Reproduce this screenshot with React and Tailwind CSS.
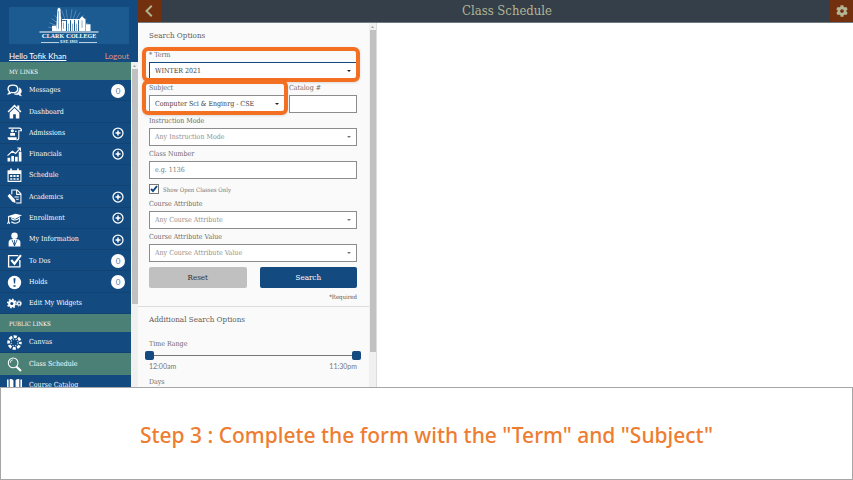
import { useState } from 'react'
import clsx from 'clsx'
import { FaCog } from 'react-icons/fa'

const ICONS = {
  comments: (
    <svg viewBox="0 0 28 28" className="size-[15px]" fill="none" stroke="currentColor">
      <path d="M11 4c5.500 0 9 3 9 7s-3.500 7-9 7l-3-.5Q6 20 3 20q2-2 1.500-4Q2 14 2 11c0-4 3.500-7 9-7z" strokeWidth="2.500" />
      <path d="M23 9q4 2 4 6 0 3-2 4.500 0 2.500 2 4.500-4 0-5.500-2.500-4.500 1-8-1 8.500 0 9.500-8z" fill="currentColor" strokeWidth="1" />
    </svg>
  ),
  home: (
    <svg viewBox="0 0 28 28" className="size-[15px]" fill="currentColor">
      <path d="M14 1 1 14l2 2L14 5l11 11 2-2-4-4V3h-4v3z" />
      <path d="M14 7.500 5 16.500V27h6.500v-8h5v8H23V16.500z" />
    </svg>
  ),
  admissions: (
    <svg viewBox="0 0 28 28" className="size-[15px]" fill="currentColor">
      <circle cx="10" cy="9" r="3" />
      <path d="M6 13h9v5H6zM1 21h17v5H4q-3 0-3-5z" />
      <path d="M3 4h20q4 0 4 5h-5v13q0 4-4 4M15 10h3" fill="none" stroke="currentColor" strokeWidth="2" />
    </svg>
  ),
  financials: (
    <svg viewBox="0 0 28 28" className="size-[15px]" fill="currentColor">
      <path d="M1 20h5v7H1zM8 17h5v10H8zM15 18h5v9h-5zM22 9h5v18h-5z" />
      <path d="m1 16 9-8 6 4 8-9M19 2h6v6" fill="none" stroke="currentColor" strokeWidth="2" />
    </svg>
  ),
  calendar: (
    <svg viewBox="0 0 28 28" className="size-[15px]" fill="currentColor">
      <path d="M1 4h26v22H1zm2 7v13h22V11z" fillRule="evenodd" />
      <path d="M6 1h3v5H6zM19 1h3v5h-3z" />
      <path d="M6 13h4v4H6zM12 13h4v4h-4zM18 13h4v4h-4zM6 19h4v3H6zM12 19h4v3h-4zM18 19h4v3h-4z" />
    </svg>
  ),
  academics: (
    <svg viewBox="0 0 28 28" className="size-[15px]" fill="currentColor">
      <path d="M9 10V2h10l7 7v17H17M18 2v8h8M14 15h8M17 19h5" fill="none" stroke="currentColor" strokeWidth="2" />
      <path d="m1 13 4-4 10 11 1 6-6-2z" />
    </svg>
  ),
  cap: (
    <svg viewBox="0 0 28 28" className="size-[15px]" fill="currentColor">
      <path d="m1 10 15-5 12 3-13 7z" />
      <path d="M8 14q7 6 15-1v7q-7 6-15 0M3 10v11M1 24l2-5 2 5" fill="none" stroke="currentColor" strokeWidth="2" />
    </svg>
  ),
  person: (
    <svg viewBox="0 0 28 28" className="size-[15px]" fill="currentColor">
      <circle cx="14" cy="7" r="6" />
      <path d="M9 13h10q6 1 6 7v7H3v-7q0-6 6-7z" />
      <path d="m9 14 5 12 5-12M14 15v11" fill="none" stroke="#134a80" strokeWidth="1.500" />
    </svg>
  ),
  check: (
    <svg viewBox="0 0 28 28" className="size-[15px]" fill="none" stroke="currentColor">
      <path d="M24 13v13H3V5h18" strokeWidth="2.500" />
      <path d="m8 13 6 7L26 4" strokeWidth="4" />
    </svg>
  ),
  alert: (
    <svg viewBox="0 0 28 28" className="size-[15px]" fill="currentColor">
      <circle cx="14" cy="14" r="12.500" />
      <path d="M12 6h4l-1 10h-2zM12 19h4v3h-4z" fill="#134a80" />
    </svg>
  ),
  cogs: (
    <svg viewBox="0 0 28 28" className="size-[15px]" fill="none" stroke="currentColor">
      <circle cx="9" cy="14" r="5" strokeWidth="4" />
      <circle cx="9" cy="14" r="8" strokeWidth="2.500" strokeDasharray="3.100 3.100" />
      <circle cx="22.500" cy="14" r="3" strokeWidth="2.500" />
      <circle cx="22.500" cy="14" r="5" strokeWidth="1.500" strokeDasharray="2 2" />
    </svg>
  ),
  canvas: (
    <svg viewBox="0 0 28 28" className="size-[15px]" fill="none" stroke="currentColor">
      <circle cx="14" cy="14" r="11" strokeWidth="5" strokeDasharray="6 2.640" strokeDashoffset="3" />
      <circle cx="14" cy="14" r="6.500" strokeWidth="2" strokeDasharray="2 3.100" strokeDashoffset="-1.500" />
    </svg>
  ),
  search: (
    <svg viewBox="0 0 28 28" className="size-[15px]" fill="none" stroke="currentColor">
      <circle cx="11.500" cy="11" r="9" strokeWidth="2" />
      <path d="M6 11q0-5 5-6" strokeWidth="1.500" />
      <path d="m18 18 8 8" strokeWidth="4" />
    </svg>
  ),
  books: (
    <svg viewBox="0 0 28 28" className="size-[15px]" fill="currentColor">
      <path d="M0 3h3v24H0zM5 2q4-1 7 2v23q-3-2-7-2zM16 4q3-3 7-2v23q-4 0-7 2zM25 3h3v24h-3z" />
    </svg>
  ),
}

const MY_LINKS = [
  { label: 'Messages', icon: ICONS.comments, count: 0 },
  { label: 'Dashboard', icon: ICONS.home },
  { label: 'Admissions', icon: ICONS.admissions, expand: true },
  { label: 'Financials', icon: ICONS.financials, expand: true },
  { label: 'Schedule', icon: ICONS.calendar },
  { label: 'Academics', icon: ICONS.academics, expand: true },
  { label: 'Enrollment', icon: ICONS.cap, expand: true },
  { label: 'My Information', icon: ICONS.person, expand: true },
  { label: 'To Dos', icon: ICONS.check, count: 0 },
  { label: 'Holds', icon: ICONS.alert, count: 0 },
  { label: 'Edit My Widgets', icon: ICONS.cogs },
]

const PUBLIC_LINKS = [
  { label: 'Canvas', icon: ICONS.canvas },
  { label: 'Class Schedule', icon: ICONS.search, active: true },
  { label: 'Course Catalog', icon: ICONS.books },
]

const RAYS = [-80, -68, -56, -44, -32, -20, -8, 8, 20, 32, 44, 56, 68, 80]

function Logo() {
  return (
    <div className="mx-[9px] mt-[7px] flex h-[37px] flex-col items-center bg-[#1c5a92] text-white">
      <svg viewBox="0 0 120 50" className="h-[26px] w-[60px] shrink-0" preserveAspectRatio="none">
        <g stroke="#5f8fba" strokeWidth="1.500">
          {RAYS.map(a => (
            <path key={a} d="M60 26V4" transform={`rotate(${a} 60 46)`} />
          ))}
        </g>
        <g fill="white">
          <path d="m37 4 3-3 3 3 2 42H34z" />
          <path d="M26 36h8v10h-8zM46 27h8v19h-8zM56 25h6v21h-6zM64 25h6v21h-6zM72 25h6v21h-6z" />
          <path d="m80 24 6-6 7 6v22H80zM94 33h9v13h-9z" />
          <path d="M46 23h34v2H46zM1 47h118v2H1z" />
        </g>
        <path d="M39 8v34M49 30v12M59 32v14M67 32v14M75 32v14M86 26v14" stroke="#1c5a92" strokeWidth="1" />
      </svg>
      <p className="font-['Liberation_Serif',serif] text-[7px] leading-[7px] font-bold whitespace-nowrap">
        C<span className="text-[6px]">LARK</span> C<span className="text-[6px]">OLLEGE</span>
      </p>
      <p className="flex items-center gap-px font-['Liberation_Serif',serif] text-[4px] leading-[4px] font-bold">
        <span className="h-px w-[18px] bg-white/70" />
        EST. 1933
        <span className="h-px w-[18px] bg-white/70" />
      </p>
    </div>
  )
}

function SectionTitle({ children }) {
  return (
    <h2 className="flex h-[18px] items-center bg-[#4b8077] pl-[9px] text-[6px] font-medium text-white">{children}</h2>
  )
}

function NavItem({ item }) {
  return (
    <li className={item.active ? 'bg-[#4b8077]' : 'border-b border-[#104273]'}>
      <a href="#" className="flex h-full items-center px-[6px] pt-px">
        <span className="flex w-4 justify-center">{item.icon}</span>
        <span className="ml-[7px] flex-1 text-[7px] font-medium whitespace-nowrap">{item.label}</span>
        {item.count !== undefined && (
          <span className="flex size-[14px] items-center justify-center rounded-full bg-white font-['Lato',sans-serif] text-[8px] text-[#4f7ba6]">
            {item.count}
          </span>
        )}
        {item.expand && (
          <svg viewBox="0 0 24 24" className="mr-px size-3" fill="none" stroke="currentColor">
            <circle cx="12" cy="12" r="10" strokeWidth="2.500" />
            <path d="M12 7v10M7 12h10" strokeWidth="3" />
          </svg>
        )}
      </a>
    </li>
  )
}

function ScrollBar({ thumb }) {
  return (
    <div className="flex w-[7px] shrink-0 flex-col items-center bg-[#f0f0f0]">
      <svg viewBox="0 0 7 7" className="size-[7px] shrink-0" fill="#a0a0a0">
        <path d="M2 5h3L3.500 3z" />
      </svg>
      <div className={`w-[6px] bg-[#c1c1c1] ${thumb}`} />
    </div>
  )
}

function Sidebar() {
  return (
    <aside className="flex w-[138px] shrink-0 flex-col bg-[#134a80] text-white">
      <Logo />
      <div className="flex h-[18px] shrink-0 items-center justify-between px-[9px] pt-[5px] font-['Lato',sans-serif] text-[8px]">
        <a href="#" className="underline">Hello Tofik Khan</a>
        <a href="#" className="text-[#e0917c]">Logout</a>
      </div>
      <div className="flex min-h-0 flex-1">
        <nav className="min-w-0 flex-1 overflow-hidden">
          <SectionTitle>MY LINKS</SectionTitle>
          <ul className="grid h-[234px] auto-rows-fr">
            {MY_LINKS.map(item => <NavItem key={item.label} item={item} />)}
          </ul>
          <SectionTitle>PUBLIC LINKS</SectionTitle>
          <ul className="grid h-16 auto-rows-fr">
            {PUBLIC_LINKS.map(item => <NavItem key={item.label} item={item} />)}
          </ul>
        </nav>
        <ScrollBar thumb="h-[235px]" />
      </div>
    </aside>
  )
}

function Highlight() {
  return (
    <span className="pointer-events-none absolute top-0 -right-[3px] -bottom-[2px] -left-[7px] rounded-md border-4 border-[#f36f21] shadow-sm" />
  )
}

function SelectField({ id, label, value, focused, highlight, muted }) {
  return (
    <div className="relative min-w-0">
      <label htmlFor={id} className="block h-[15px] text-[7px] leading-[17px] text-[#6b6b6b]">{label}</label>
      <div className="relative">
        <select
          id={id}
          className={clsx(
            'block h-[18px] w-full appearance-none border bg-white pl-[5px] text-[7px]',
            focused ? 'border-[#134a80]' : 'border-[#8c8c8c]',
            muted ? 'text-[#8f8f8f]' : 'text-[#3d3d3d]'
          )}
        >
          <option>{value}</option>
        </select>
        <svg viewBox="0 0 8 4" className="pointer-events-none absolute top-2 right-[6px] h-[2px] w-1" fill={muted ? '#777' : '#222'}>
          <path d="M0 0h8L4 4z" />
        </svg>
      </div>
      {highlight && <Highlight />}
    </div>
  )
}

function TextField({ id, label, placeholder }) {
  return (
    <div className="min-w-0">
      <label htmlFor={id} className="block h-[15px] text-[7px] leading-[17px] text-[#6b6b6b]">{label}</label>
      <input
        id={id}
        type="text"
        placeholder={placeholder}
        className="block h-[18px] w-full border border-[#8c8c8c] bg-white px-[5px] text-[7px] placeholder:text-[#777]"
      />
    </div>
  )
}

const THUMB =
  'pointer-events-none col-start-1 row-start-1 h-[9px] w-full appearance-none bg-transparent [&::-webkit-slider-thumb]:pointer-events-auto [&::-webkit-slider-thumb]:size-[9px] [&::-webkit-slider-thumb]:appearance-none [&::-webkit-slider-thumb]:rounded-xs [&::-webkit-slider-thumb]:bg-[#134a80]'

function TimeRange() {
  const [from, setFrom] = useState(0)
  const [to, setTo] = useState(47)

  return (
    <fieldset>
      <legend className="h-[14px] text-[7px] leading-[15px] text-[#6b6b6b]">Time Range</legend>
      <div className="-mx-1 grid items-center">
        <div className="col-start-1 row-start-1 mx-1 h-px bg-[#777]" />
        <input type="range" aria-label="Start time" max="47" value={from} onChange={e => setFrom(+e.target.value)} className={THUMB} />
        <input type="range" aria-label="End time" max="47" value={to} onChange={e => setTo(+e.target.value)} className={THUMB} />
      </div>
      <div className="flex justify-between font-['Lato',sans-serif] text-[7px] leading-[12px] text-[#777]">
        <span>12:00am</span>
        <span>11:30pm</span>
      </div>
    </fieldset>
  )
}

function SearchPanel() {
  const [openOnly, setOpenOnly] = useState(true)

  return (
    <div className="flex w-[239px] shrink-0 border-r border-[#dcdcdc] bg-[#fafafa]">
      <div className="min-w-0 flex-1 overflow-hidden">
        <form className="pt-[6px] pr-3 pb-1 pl-[11px]">
          <h2 className="h-[18px] text-[8px] leading-[14px] text-[#5c5c5c]">Search Options</h2>
          <SelectField id="term" label="* Term" value="WINTER 2021" focused highlight />
          <div className="grid grid-cols-[2fr_1fr] gap-1">
            <SelectField id="subject" label="Subject" value="Computer Sci &amp; Enginrg - CSE" highlight />
            <TextField id="catalog" label="Catalog #" />
          </div>
          <SelectField id="mode" label="Instruction Mode" value="Any Instruction Mode" muted />
          <TextField id="number" label="Class Number" placeholder="e.g. 1136" />
          <label className="flex h-[17px] items-center gap-1 pt-[3px] text-[6px] text-[#777]">
            <span className="relative size-[10px]">
              <input
                type="checkbox"
                checked={openOnly}
                onChange={e => setOpenOnly(e.target.checked)}
                className="peer block size-[10px] appearance-none border border-[#777] bg-white"
              />
              <svg viewBox="0 0 10 10" className="pointer-events-none absolute inset-0 hidden peer-checked:block" fill="none" stroke="#134a80" strokeWidth="2">
                <path d="m2 5 2 2 4-5" />
              </svg>
            </span>
            Show Open Classes Only
          </label>
          <SelectField id="attribute" label="Course Attribute" value="Any Course Attribute" muted />
          <SelectField id="attribute-value" label="Course Attribute Value" value="Any Course Attribute Value" muted />
          <div className="grid grid-cols-2 gap-[13px] pt-[5px] text-[8px]">
            <button type="reset" className="h-[21px] rounded-xs bg-[#c0c0c0] text-[#333]">Reset</button>
            <button type="button" className="h-[21px] rounded-xs bg-[#134a80] font-medium text-white">Search</button>
          </div>
          <p className="pt-1 text-right text-[6px] leading-[10px] text-[#555]">*Required</p>
        </form>
        <section className="border-t border-[#dcdcdc] pt-[6px] pr-3 pl-[11px]">
          <h2 className="h-[24px] text-[8px] leading-[14px] text-[#5c5c5c]">Additional Search Options</h2>
          <TimeRange />
          <p className="pt-[3px] text-[7px] leading-[14px] text-[#6b6b6b]">Days</p>
        </section>
      </div>
      <ScrollBar thumb="h-[322px]" />
    </div>
  )
}

export default function App() {
  return (
    <div className="flex h-screen flex-col overflow-hidden bg-white font-['DejaVu_Serif_Condensed','DejaVu_Serif',serif]">
      <div className="flex min-h-0 flex-1">
        <Sidebar />
        <main className="flex min-w-0 flex-1 flex-col">
          <header className="flex h-[23px] shrink-0 items-stretch border-b border-[#6f7a82] bg-[#343f49] text-[#b3b594]">
            <button type="button" aria-label="Back" className="flex w-[23px] items-center justify-center bg-[#73300f]">
              <svg viewBox="0 0 12 16" className="h-3 w-[9px]" fill="none" stroke="currentColor" strokeWidth="2.500">
                <path d="M9 1 2 8l7 7" />
              </svg>
            </button>
            <h1 className="flex flex-1 items-center justify-center pl-[23px] text-[13px]">Class Schedule</h1>
            <button type="button" aria-label="Settings" className="flex w-[23px] items-center justify-center bg-[#73300f]">
              <FaCog className="size-3" />
            </button>
          </header>
          <div className="flex min-h-0 flex-1">
            <SearchPanel />
          </div>
        </main>
      </div>
      <footer className="flex h-[93px] shrink-0 items-center justify-center border border-[#a6a6a6] bg-white pt-1">
        <p className="font-['Noto_Sans',sans-serif] text-[21px] font-medium text-[#ed7d31]">
          Step 3 : Complete the form with the "Term" and "Subject"
        </p>
      </footer>
    </div>
  )
}
